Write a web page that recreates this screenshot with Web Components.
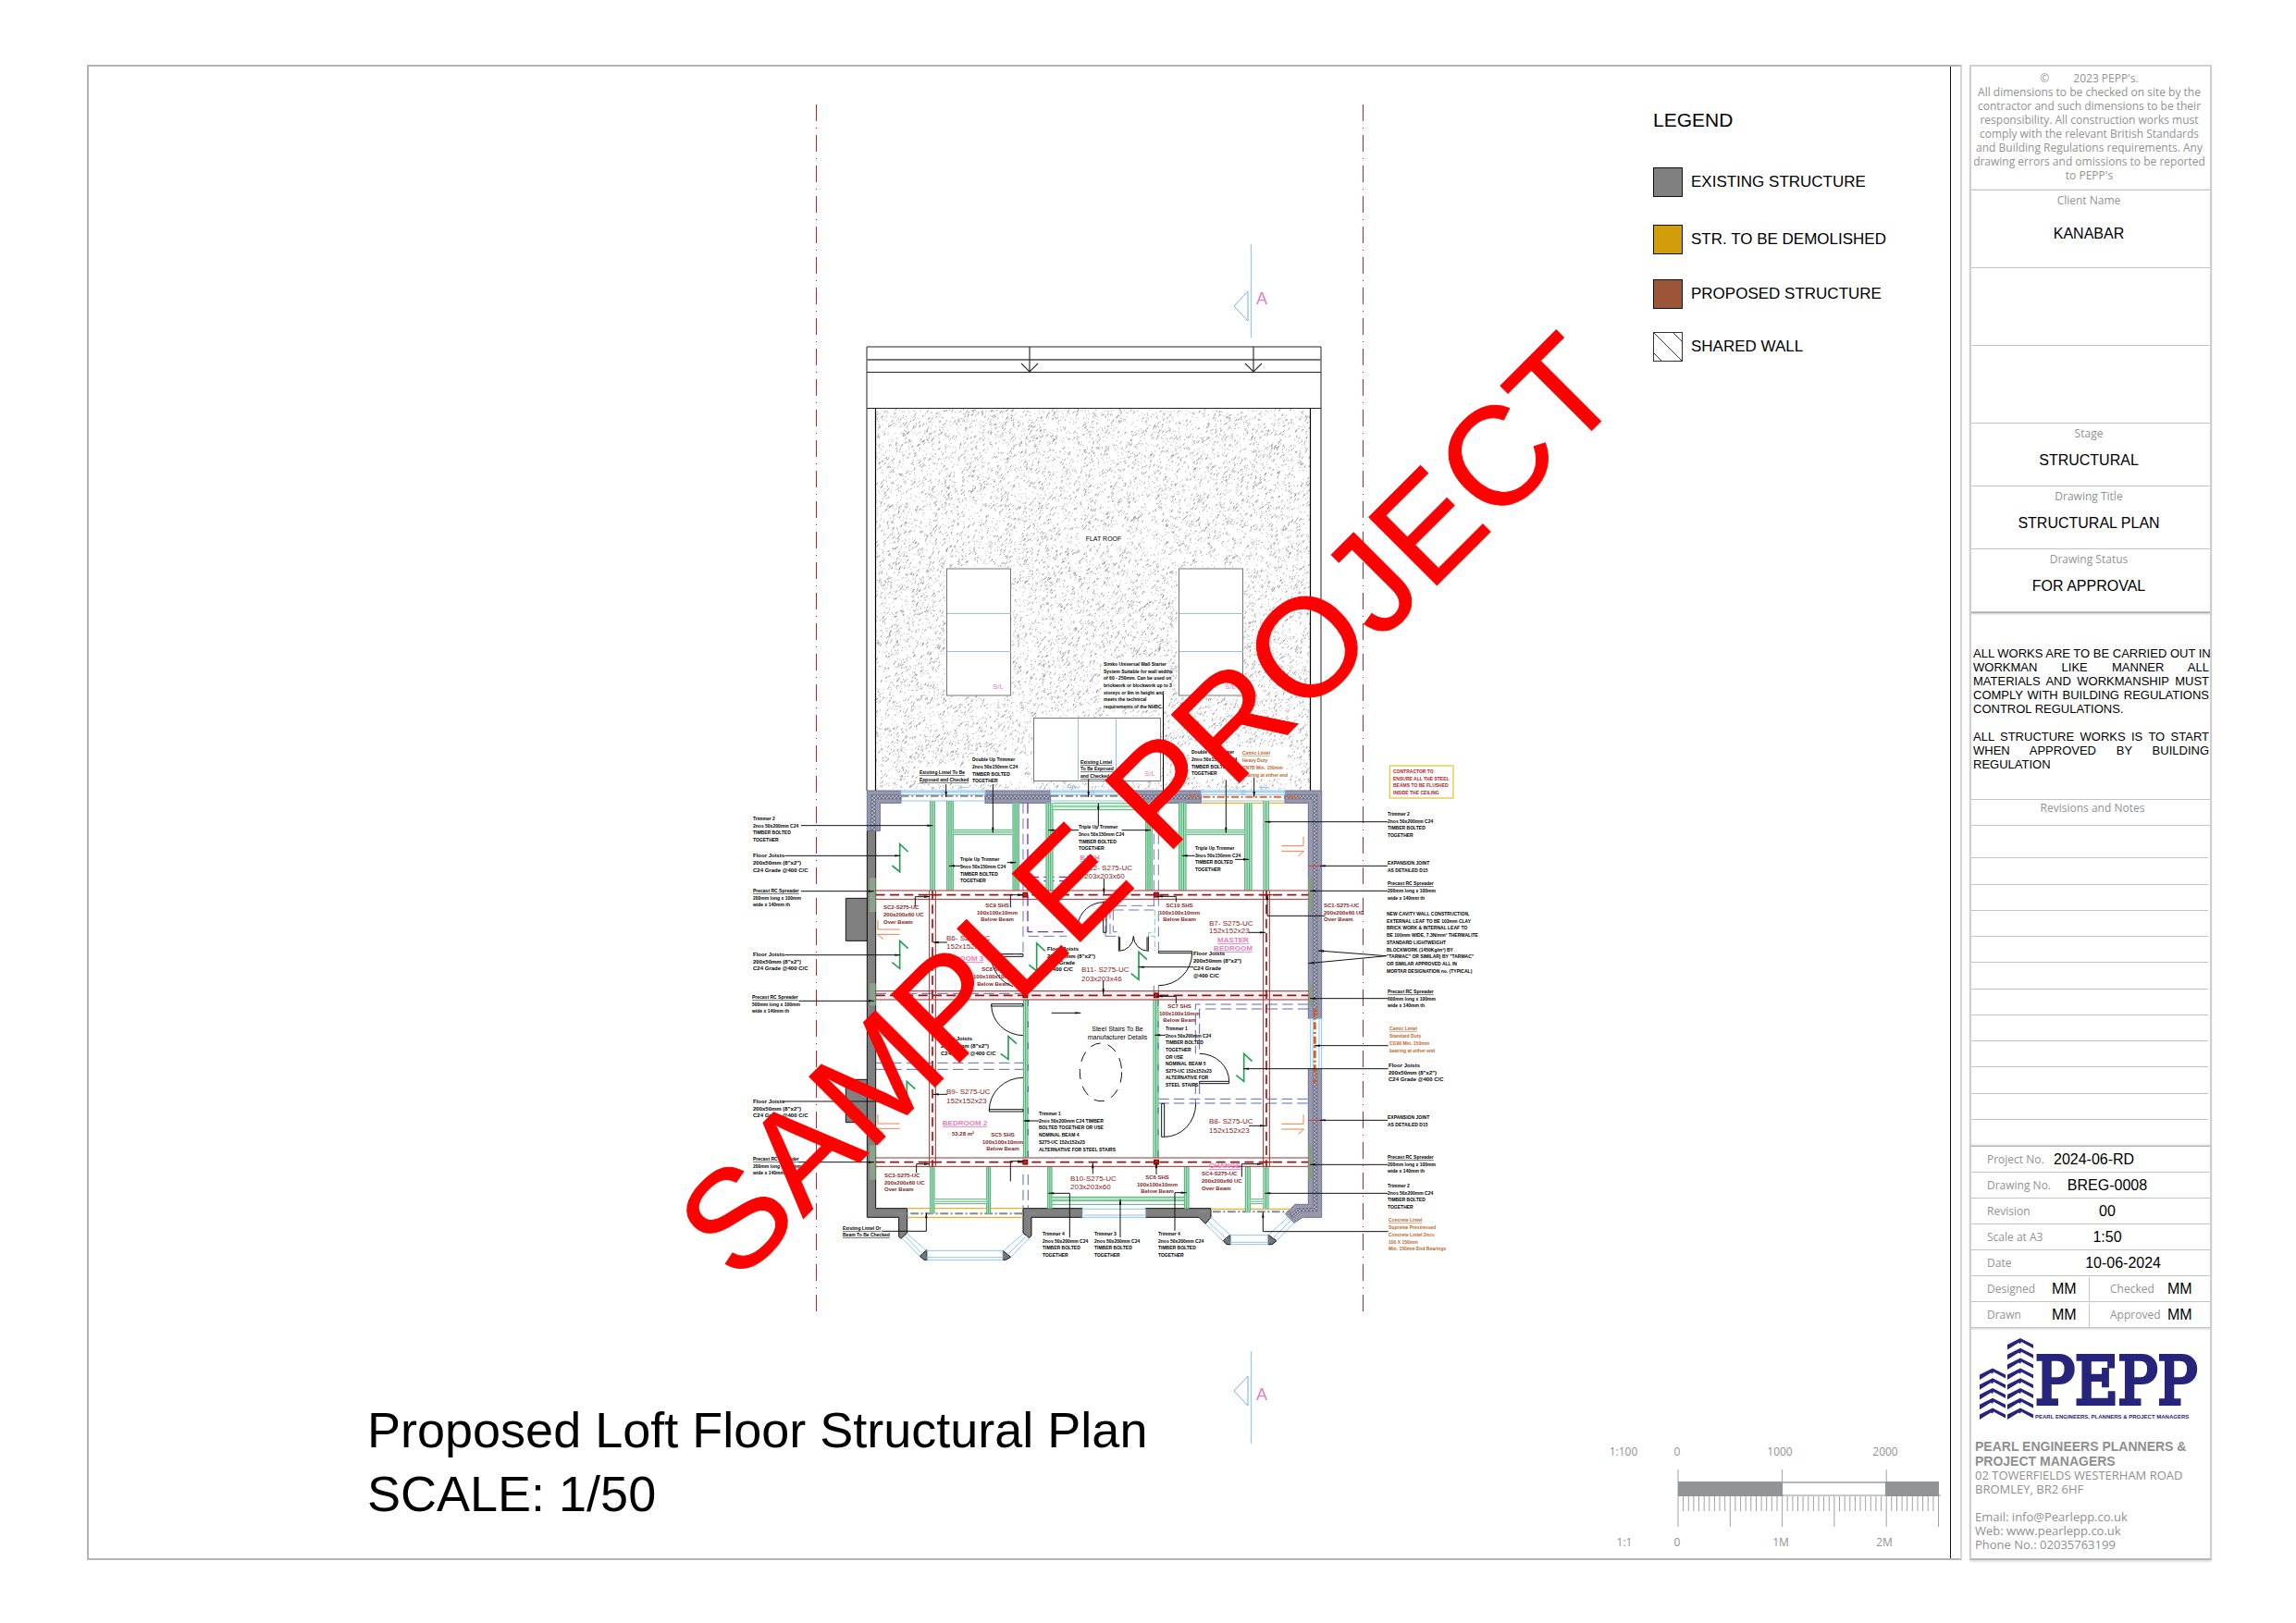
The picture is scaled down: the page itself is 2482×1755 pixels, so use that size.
<!DOCTYPE html>
<html lang="en">
<head>
<meta charset="utf-8">
<title>Proposed Loft Floor Structural Plan</title>
<style>
  html { background: #fff; }
  body {
    margin: 0;
    box-sizing: border-box;
    min-height: 100vh;
    padding: 70px 91px 68px 94px;
    display: grid;
    grid-template-columns: minmax(0, 1fr) 262px;
    gap: 8px;
    font-family: "Liberation Sans", Arial, sans-serif;
    color: #000;
    --label: #929292;
    --rule: #c4c4c4;
    --label-font: "Open Sans", "Noto Sans", sans-serif;
  }
</style>
</head>
<body>
<drawing-sheet>
  <floor-plan slot="plan"></floor-plan>
  <span slot="title">Proposed Loft Floor Structural Plan</span>
  <span slot="scale">SCALE: 1/50</span>
  <plan-legend slot="legend"></plan-legend>
  <scale-bar slot="bar"></scale-bar>
</drawing-sheet>
<title-block></title-block>

<script>
const define = (name, html, after) => {
  const tpl = document.createElement('template');
  tpl.innerHTML = html;
  customElements.define(name, class extends HTMLElement {
    constructor() {
      super();
      this.attachShadow({ mode: 'open' }).append(tpl.content.cloneNode(true));
      if (after) after(this.shadowRoot, this);
    }
  });
};

/* ---------- sheet frame ---------- */
define('drawing-sheet', `
<style>
  :host { display: block; box-sizing: border-box; border: 2px solid #b4b4b4; border-right-color: #d6d6d6; padding-right: 10px; }
  .area {
    box-sizing: border-box; height: 100%;
    display: grid;
    grid-template-columns: 301fr 333fr 1000fr 378fr;
    grid-template-rows: minmax(0, 1fr) auto;
    border-right: 1px solid #111;
    padding: 28px 0 8px;
  }
  .plan { grid-area: 1 / 3 / 3 / 4; }
  .titles { grid-area: 2 / 2 / 3 / 4; margin: 0; padding-bottom: 27px; font-weight: normal; font-size: 54px; line-height: 69px; }
  .titles ::slotted(span) { display: block; }
  .legend { grid-area: 1 / 4 / 2 / 5; padding: 16px 0 0 57px; }
  .bar { grid-area: 2 / 3 / 3 / 5; align-self: end; justify-self: end; padding: 0 8px 0 0; }
</style>
<section class="area">
  <div class="plan"><slot name="plan"></slot></div>
  <h1 class="titles"><slot name="title"></slot><slot name="scale"></slot></h1>
  <div class="legend"><slot name="legend"></slot></div>
  <div class="bar"><slot name="bar"></slot></div>
</section>`);

/* ---------- legend ---------- */
define('plan-legend', `
<style>
  :host { display: block; }
  h2 { margin: 0; font-size: 21px; line-height: 28px; font-weight: normal; }
  ul { list-style: none; margin: 37px 0 0; padding: 0; display: grid; grid-template-rows: 62px 59px 57px 32px; }
  li { display: flex; align-items: center; gap: 9px; height: 32px; font-size: 17px; white-space: nowrap; }
  svg { width: 32px; height: 32px; flex: none; }
</style>
<h2>LEGEND</h2>
<ul>
  <li><svg viewBox="0 0 32 32"><rect x=".5" y=".5" width="31" height="31" fill="#808080" stroke="#111"/></svg>EXISTING STRUCTURE</li>
  <li><svg viewBox="0 0 32 32"><rect x=".5" y=".5" width="31" height="31" fill="#d29d0a" stroke="#111"/></svg>STR. TO BE DEMOLISHED</li>
  <li><svg viewBox="0 0 32 32"><rect x=".5" y=".5" width="31" height="31" fill="#9c5537" stroke="#111"/></svg>PROPOSED STRUCTURE</li>
  <li><svg viewBox="0 0 32 32"><rect x=".5" y=".5" width="31" height="31" fill="#fff" stroke="#333"/><path d="M1 1L31 31M22 1L31 10M1 23L9 31" stroke="#333" fill="none"/></svg>SHARED WALL</li>
</ul>`);

/* ---------- scale bar ---------- */
define('scale-bar', `
<style>
  :host { display: block; }
  svg { display: block; width: 364px; height: 116px; }
  text { font: 12px "Open Sans", "Noto Sans", sans-serif; fill: #929292; text-anchor: middle; }
</style>
<svg viewBox="1737 1560 364 116" role="img" aria-label="Scale bar">
  <g id="t" stroke="#a2a2a4"></g>
  <rect x="1815" y="1601" width="113" height="16" fill="#939497"/>
  <rect x="2039" y="1601" width="58" height="16" fill="#939497"/>
  <path d="M1928 1602H2039" stroke="#b5b5b5" stroke-width="2"/><path d="M1928 1616H2099" stroke="#929292"/>
  <text x="1756" y="1573">1:100</text><text x="1814" y="1573">0</text><text x="1925" y="1573">1000</text><text x="2039" y="1573">2000</text>
  <text x="1757" y="1671">1:1</text><text x="1814" y="1671">0</text><text x="1926" y="1671">1M</text><text x="2038" y="1671">2M</text>
</svg>`, root => {
  let d = '';
  for (let i = 0; i <= 50; i++) {
    const x = (1815 + i * 5.63).toFixed(1);
    d += `M${x} ${i % 20 === 0 ? 1588 : 1617}V${i % 10 === 0 ? 1650 : 1633}`;
  }
  root.getElementById('t').innerHTML = `<path d="${d}"/>`;
});

/* ---------- company mark ---------- */
define('pepp-logo', `
<style>
  :host { display: block; }
  svg { display: block; width: 240px; height: 92px; }
  .n { font: 71px "DejaVu Serif Condensed", "DejaVu Serif", serif; font-stretch: condensed; fill: #27247b; stroke: #27247b; stroke-width: 4px; }
  .s { font: bold 6px "Liberation Sans", Arial, sans-serif; fill: #27247b; }
</style>
<svg viewBox="0 0 240 92" role="img" aria-label="PEPP">
  <g id="c" fill="#27247b"></g>
  <text class="n" x="62" y="73">PEPP</text>
  <text class="s" x="62" y="89">PEARL ENGINEERS, PLANNERS &amp; PROJECT MANAGERS</text>
</svg>`, root => {
  const chev = (x, y) => `<path d="M${x} ${y + 7}L${x + 14} ${y}L${x + 28} ${y + 7}V${y + 11}L${x + 15} ${y + 4}L${x + 14} ${y + 6}L${x + 12} ${y + 5}L${x} ${y + 12.5}Z"/>`;
  let s = '';
  for (let i = 0; i < 8; i++) s += chev(32, 2 + i * 10.8);
  for (let i = 3; i < 8; i++) s += chev(2, 2 + i * 10.8);
  root.getElementById('c').innerHTML = s;
});

/* ---------- one labelled field in the title block ---------- */
define('tb-field', `
<style>
  :host { display: flex; flex-direction: column; align-items: center; box-sizing: border-box; height: 68px; border-bottom: 1px solid var(--rule); padding: 3px 4px 0 0; }
  :host([tall]) { height: 84px; }
  .l { font: 12px/16px var(--label-font); color: var(--label); }
  .v { font-size: 16px; line-height: 20px; margin-top: 11px; }
  :host([tall]) .v { margin-top: 18px; }
</style>
<span class="l"><slot name="label"></slot></span>
<span class="v"><slot></slot></span>`);

/* ---------- title block ---------- */
define('title-block', `
<style>
  :host { display: flex; flex-direction: column; box-sizing: border-box; border: 2px solid #cfcfcf; border-bottom-color: #b5b5b5; box-shadow: 0 2px 2px #e4e4e4; }
  p { margin: 0; }
  .notice { box-sizing: border-box; height: 134px; padding: 5px 3px 0 0; text-align: center; font: 12px/15px var(--label-font); color: var(--label); white-space: nowrap; border-bottom: 1px solid #b0b0b0; }
  .c { display: inline-block; margin-right: 26px; }
  .fields { border-bottom: 1px solid #b0b0b0; box-shadow: 0 0 2px 1px #ccc; }
  .works { padding: 36px 1px 30px 2px; font-size: 13px; line-height: 15px; }
  .works span { display: block; white-space: nowrap; }
  .works .j { text-align: justify; text-align-last: justify; }
  .works p + p { margin-top: 15px; }
  .rev { border: solid var(--rule); border-width: 1px 0; margin: 0; font: 12px/18px var(--label-font); height: 27px; text-align: center; color: var(--label); padding-left: 4px; box-sizing: content-box; }
  ol { list-style: none; margin: 0; padding: 7px 0 1px; flex: 1; display: flex; flex-direction: column; }
  li { flex: 1; border-bottom: 1px solid var(--rule); margin-right: 2px; }
  li:last-child { border-bottom: 0; }
  dl { margin: 0; box-shadow: 0 0 2px 1px #ccc; border-top: 1px solid #b0b0b0; }
  dl > div { display: grid; grid-template-columns: 72px 116px 1fr; align-items: center; box-sizing: border-box; height: 28px; padding-left: 17px; border-bottom: 1px solid var(--rule); }
  dl > .two { grid-template-columns: 70px 41px 22px 62px 1fr; }
  .two i { height: 26px; border-right: 1px solid var(--rule); grid-column: 2; grid-row: 1; }
  .two dt:nth-of-type(2) { grid-column: 4; }
  .two dd:nth-of-type(1) { grid-column: 2; grid-row: 1; text-align: left; }
  .two dd:nth-of-type(2) { text-align: left; }
  dt { font: 12px/16px var(--label-font); color: var(--label); white-space: nowrap; }
  dd { margin: 0; font-size: 16px; text-align: center; white-space: nowrap; }
  .s { text-align: left; } .e { text-align: right; }
  pepp-logo { padding: 9px 0 0 7px; }
  address { font: 13px/15px var(--label-font); color: #8f8f8f; padding: 19px 0 7px 4px; white-space: nowrap; }
  address b { display: block; font: bold 14px/16px "Liberation Sans", Arial, sans-serif; }
  address .m { margin-top: 15px; }
  a { color: inherit; text-decoration: none; }
</style>
<p class="notice"><span class="c">©</span>2023 PEPP's.<br>All dimensions to be checked on site by the<br>contractor and such dimensions to be their<br>responsibility. All construction works must<br>comply with the relevant British Standards<br>and Building Regulations requirements. Any<br>drawing errors and omissions to be reported<br>to PEPP's</p>
<div class="fields">
  <tb-field tall><span slot="label">Client Name</span>KANABAR</tb-field>
  <tb-field tall></tb-field>
  <tb-field tall></tb-field>
  <tb-field><span slot="label">Stage</span>STRUCTURAL</tb-field>
  <tb-field><span slot="label">Drawing Title</span>STRUCTURAL PLAN</tb-field>
  <tb-field><span slot="label">Drawing Status</span>FOR APPROVAL</tb-field>
</div>
<div class="works">
  <p><span class="j">ALL WORKS ARE TO BE CARRIED OUT IN</span><span class="j">WORKMAN LIKE MANNER ALL</span><span class="j">MATERIALS AND WORKMANSHIP MUST</span><span class="j">COMPLY WITH BUILDING REGULATIONS</span><span>CONTROL REGULATIONS.</span></p>
  <p><span class="j">ALL STRUCTURE WORKS IS TO START</span><span class="j">WHEN APPROVED BY BUILDING</span><span>REGULATION</span></p>
</div>
<h3 class="rev">Revisions and Notes</h3>
<ol><li></li><li></li><li></li><li></li><li></li><li></li><li></li><li></li><li></li><li></li><li></li><li></li></ol>
<dl>
  <div><dt>Project No.</dt><dd class="s">2024-06-RD</dd></div>
  <div><dt>Drawing No.</dt><dd>BREG-0008</dd></div>
  <div><dt>Revision</dt><dd>00</dd></div>
  <div><dt>Scale at A3</dt><dd>1:50</dd></div>
  <div><dt>Date</dt><dd class="e">10-06-2024</dd></div>
  <div class="two"><dt>Designed</dt><i></i><dd>MM</dd><dt>Checked</dt><dd>MM</dd></div>
  <div class="two"><dt>Drawn</dt><i></i><dd>MM</dd><dt>Approved</dt><dd>MM</dd></div>
</dl>
<pepp-logo></pepp-logo>
<address>
  <b>PEARL ENGINEERS PLANNERS &amp;<br>PROJECT MANAGERS</b>
  02 TOWERFIELDS WESTERHAM ROAD<br>BROMLEY, BR2 6HF
  <div class="m">Email: <a href="mailto:info@Pearlepp.co.uk">info@Pearlepp.co.uk</a><br>Web: <a href="http://www.pearlepp.co.uk">www.pearlepp.co.uk</a><br>Phone No.: 02035763199</div>
</address>`);

/* ---------- floor plan ---------- */
define('floor-plan', `
<style>
  :host { display: block; }
  svg { display: block; width: 100%; overflow: visible; }
  text { font-family: "Liberation Sans", Arial, sans-serif; }
  .mark { font-size: 151px; fill: #f00; stroke: #f00; stroke-width: 1px; }
</style>
<svg viewBox="730 100 1000 1480" role="img" aria-label="Loft floor structural plan">
  <defs>
    <pattern id="brick" width="6" height="6" patternUnits="userSpaceOnUse"><rect width="6" height="6" fill="#8c8c98"/><path d="M0 0h3v3H0zM3 3h3v3H3z" fill="#a6a6b0"/></pattern>
    <pattern id="cav" width="12" height="12" patternUnits="userSpaceOnUse"><rect width="12" height="12" fill="#747488"/><path d="M1 1h4v4H1zM7 7h4v4H7z" fill="#e8e8ec"/></pattern>
  </defs>
  <g id="roof"></g>
  <g id="draw" transform="translate(800 780) scale(.33333)" fill="none"></g>
  <g id="notes"></g>
  <text class="mark" transform="translate(797 1389) rotate(-45)">SAMPLE PROJECT</text>
</svg>`, root => {
  /* Roof, in sheet units */
  let seed = 7;
  const rnd = () => (seed = (seed * 16807) % 2147483647) / 2147483647;
  const clear = [[1023,614,70,139],[1274,614,70,139],[1117,776,138,70],[1170,574,48,16],[1191,712,72,56],[992,830,58,17],[1050,816,56,30],[1287,808,104,34]];
  let dash = '', dots = '';
  for (let i = 0; i < 14500; i++) {
    const x = 947 + rnd() * 468, y = 443 + rnd() * 411, k = rnd();
    if (clear.some(c => x > c[0] - 2 && x < c[0] + c[2] && y > c[1] && y < c[1] + c[3])) continue;
    const p = `M${x.toFixed(1)} ${y.toFixed(1)}`;
    if (k < .25) dash += p + 'l1.6 -2.4'; else dots += p + 'h1';
  }
  const line = (d, c, w = 1, x = '') => `<path d="${d}" stroke="${c}" stroke-width="${w}" fill="none" ${x}/>`;
  const sky = '#8fc4ee';
  root.getElementById('roof').innerHTML =
    line(dash, '#777', .7) + line(dots, '#888', .7) +
    line('M937 855V375H1428V855M937 402.5H1428', '#222') + line('M937 389H1428', '#777', 2) + line('M937 441.5H1428', '#222') +
    line('M946.5 441V855M1416.5 441V855', '#000', 1.2) +
    line('M1113 375V402M1104 393L1113 402L1122 393M1355 375V402M1346 393L1355 402L1364 393', '#333', 1.2) +
    [[1023.5,615,69,137],[1274.5,615,69,137],[1117.5,776.5,137,68]].map(r => `<rect x="${r[0]}" y="${r[1]}" width="${r[2]}" height="${r[3]}" fill="#fff" stroke="#777"/>`).join('') +
    line('M1024 663.5H1093M1024 704.5H1093M1275 663.5H1344M1275 704.5H1344M1165.5 777V845M1206.5 777V845', sky) +
    line('M1257.5 750V862', '#000') +
    line('M882.5 113V1420M1473.5 113V1420', '#b8252c', 1, 'stroke-dasharray="18 7 1 7"') +
    line('M1352.5 264V365M1352.5 1461V1561', '#9cc9f0', 1.3) +
    line('M1334 331L1349 315V347ZM1334 1504L1349 1488V1520Z', '#6db0e6');

  /* Structure, in thirds of a sheet unit from the plan's own origin */
  const o = [];
  const L = (d, c, w = 3, x) => o.push(line(d, c, w, x));
  const R = (x, y, X, Y, f, s = 'none', w = 3) => o.push(`<rect x="${x}" y="${y}" width="${X - x}" height="${Y - y}" fill="${f}" stroke="${s}" stroke-width="${w}"/>`);
  const P = (pts, f, s = '#111', w = 3) => o.push(`<polygon points="${pts}" fill="${f}" stroke="${s}" stroke-width="${w}"/>`);
  const indigo = '#636bac', G = '#808080';

  /* existing walls */
  P('412,355 440,355 440,1580 542,1580 542,1660 522,1678 515,1672 515,1609 412,1609', G);
  P('343,574 412,574 412,712 343,712', G); P('343,1162 412,1162 412,1301 343,1301', G);
  P('918,1580 1110,1580 1110,1609 945,1609 945,1668 938,1676 918,1660', G);
  P('1315,1580 1527,1580 1527,1609 1509,1630 1488,1609 1315,1609', G);
  [[583,1735,605,1715,608,1747,597,1747],[852,1717,878,1738,862,1747,852,1747],[1567,1685,1590,1665,1592,1697,1578,1697],[1712,1665,1740,1685,1725,1697,1712,1697]].forEach(p => P(p.join(' '), '#777'));

  /* cavity walls */
  P('412,225 522,225 522,265 454,265 454,355 412,355', 'url(#brick)', indigo);
  P('424,238 522,238 522,252 440,252 440,355 424,355', 'url(#cav)', indigo, 2);
  [[795,1007],[1280,1495]].forEach(a => { R(a[0], 225, a[1], 265, 'url(#brick)', indigo); R(a[0], 238, a[1], 252, 'url(#cav)', indigo, 2); });
  P('1767,225 1886,225 1886,1609 1825,1609 1797,1627 1768,1598 1800,1567 1843,1567 1843,265 1767,265', 'url(#brick)', indigo);
  P('1767,238 1872,238 1872,1590 1815,1590 1792,1612 1782,1600 1808,1580 1858,1580 1858,252 1767,252', 'url(#cav)', indigo, 2);
  R(1840, 965, 1890, 1127, '#fff'); R(1850, 965, 1886, 1127, '#fff', sky); L('M1858 965V1127M1878 965V1127', sky);
  L('M1864 930V1172', '#dd5b1f', 8, 'stroke-dasharray="24 8 6 8"');
  [[508,618],[850,922],[1375,1487]].forEach(a => { R(420, a[0], 440, a[1], '#8aa48a'); R(1843, a[0], 1857, a[1], '#8a9c80'); });
  L('M1843 469H1880M1843 1294H1880', '#d33');

  /* windows */
  [[522,795],[1007,1280],[1495,1767]].forEach((a, i) => {
    R(a[0], 225, a[1], 238, '#eaf4fd', sky); L(`M${a[0]} 229H${a[1]}M${a[0]} 258H${a[1]}`, sky); R((a[0]+a[1])/2-4, 225, (a[0]+a[1])/2+4, 238, 'none', sky);
    if (i < 2) L(`M${a[0]} 242H${a[1]}`, '#888', 6, 'stroke-dasharray="26 8 6 8"');
  });
  L('M1455 245H1815', '#dd6a35', 6, 'stroke-dasharray="24 8 6 8"'); L('M1495 265H1767', '#e8b820', 4);
  R(1110, 1582, 1315, 1609, '#fff', sky); L('M1115 1602H1312', sky);
  L('M712 214H740M720 208L712 214L720 220M1060 214H1092M1084 208L1092 214L1084 220M1685 214H1715M1693 208L1685 214L1693 220', sky);
  /* bays */
  R(608, 1717, 852, 1747, '#fff', sky); L('M608 1739H852', sky);
  L('M527 1678L583 1735M535 1670L592 1728M542 1662L605 1718M938 1676L878 1738M930 1668L868 1730M918 1662L855 1718', sky);
  R(1592, 1667, 1712, 1697, '#fff', sky); L('M1592 1690H1712', sky);
  L('M1509 1630L1567 1687M1518 1622L1577 1679M1527 1609L1590 1667M1797 1627L1740 1685M1788 1617L1728 1677M1778 1607L1714 1666', sky);
  L('M542 1580H918M542 1609H918M1527 1582H1785', '#e8b030', 4);
  L('M505 1597H960M1485 1591H1785', '#888', 6, 'stroke-dasharray="26 8 6 8"');

  /* partitions over, dashed */
  const db = 'stroke-dasharray="34 16"';
  L('M918 265V760M935 697H1060M852 755H918M1185 697V640M1185 697H1230M1200 690V612M1210 612V683H1228M1220 598H1345M1210 612H1342M1342 265V598M1357 265V745M1342 857V880M1357 857V880', '#6a78bc', 3, db);
  L('M933 265V683H1060M935 518H1060M935 505H1060', '#7a2fc0', 4, db);
  L('M440 883H918M440 1108H918M440 1129H918M918 1470V1580M934 1470V1580', '#5a68b4', 3, db);
  L('M1843 918H1477V1078M1843 933H1490V1078M1477 1175V1239M1490 1175V1225M1357 1225H1843M1357 1239H1843', '#5a68b4', 3, db);
  L('M1345 612V685H1325V697H1345V745', '#7fd0a0', 3, 'stroke-dasharray="20 8"');

  /* timber trimmers */
  const green = '#2fa35c', pale = '#b4e2c6';
  const V = (x, X, y, Y) => { R(x, y, X, Y, pale); const n = X - x > 18 ? 4 : 3; for (let i = 0; i < n; i++) { const a = x + 1 + (X - x - 2) * i / (n - 1); L(`M${a} ${y}V${Y}`, green, 2.5); } };
  const H = (x, X, y, Y, f = '#fff') => { R(x, y, X, Y, f); for (let i = 0; i < 3; i++) { const a = y + (Y - y) * i / 2; L(`M${x} ${a}H${X}`, green, 2.5); } };
  [[616,632,258],[670,692,258],[884,905,265],[992,1015,265],[1315,1337,265],[1423,1447,265],[1636,1660,265],[1697,1715,258]].forEach(a => V(a[0], a[1], a[2], 548));
  H(692,884,352,367,'#dff2e6'); H(1015,1315,265,287,'#dff2e6'); H(1447,1636,352,367,'#dff2e6');
  V(918,934,903,1415); V(1340,1357,903,1415);
  V(616,631,1444,1597); V(799,813,1444,1597); V(997,1012,1444,1580); V(1440,1456,1444,1580); V(1638,1655,1444,1592); V(1697,1714,1444,1582);
  H(631,799,1550,1565); R(1012,1543,1440,1556,pale); H(1012,1440,1543,1567,'none'); H(1655,1697,1550,1565);
  L('M1356 903V1415M934 903V1415', '#2c6fa0', 3, 'stroke-dasharray="20 50"');

  /* steel beams */
  const steel = '#a02c2c';
  R(440,876,1843,903,'rgba(190,120,120,.12)');
  [549,875,1416].forEach(y => { L(`M440 ${y}H1843M440 ${y + 28}H1843`, steel, 3); L(`M440 ${y + 14}H1843`, '#8a1c1c', 5, 'stroke-dasharray="30 16"'); });
  [614,1697].forEach(x => { L(`M${x} 549V1444M${x + 20} 549V1444`, steel, 3); L(`M${x + 10} 549V1444`, '#8a1c1c', 5, 'stroke-dasharray="30 16"'); });
  [[925,563],[1350,563],[925,889],[1350,889],[925,1430],[1350,1430]].forEach(([x, y]) => R(x - 7, y - 7, x + 7, y + 7, '#c02020', '#8a1010', 4));
  L('M604 563H644M604 1430H644M1687 563H1727M1687 1430H1727', '#a01818', 4);

  /* doors */
  const ink = '#111';
  const D = d => L(d, ink);
  D('M1178 585H1188V685H1178ZM1178 587A85 85 0 0 0 1095 660');
  D('M1228 697V745A48 48 0 0 0 1276 697A48 48 0 0 0 1324 745V697M1232 700V742M1320 700V742');
  D('M1357 746H1466V752H1357ZM1466 752A108 106 0 0 1 1357 857');
  D('M815 755H918V763H815ZM815 763A105 105 0 0 0 885 860');
  D('M815 917H918V924H815ZM815 920A105 100 0 0 0 918 1019');
  D('M808 1259H918V1266H808ZM808 1262A110 106 0 0 1 918 1156');
  D('M1490 1168H1586V1175H1490ZM1586 1168A96 90 0 0 0 1490 1078');
  D('M1367 1240H1376V1348H1367ZM1376 1348A102 108 0 0 0 1478 1240');
  o.push('<ellipse cx="1170" cy="1138" rx="68" ry="94" stroke="#111" stroke-width="3" stroke-dasharray="34 24"/>');

  /* joist direction marks */
  [[518,398],[518,712],[962,720],[1293,748],[1634,1078],[541,1168]].forEach(([x, y]) => L(`M${x + 27} ${y + 25}L${x} ${y}V${y + 90}L${x - 25} ${y + 70}`, '#25a152', 5));
  L('M897 1046L870 1022V1096L845 1078', '#25a152', 5);
  [0, 630].forEach(k => L(`M447 ${645 + k}V${675 + k}H518M518 ${691 + k}H445L465 ${707 + k}`, '#e8824a'));
  [0, 902].forEach(k => L(`M1827 ${374 + k}V${404 + k}H1756M1756 ${421 + k}H1829L1810 ${437 + k}`, '#e8824a'));

  /* leaders: the arrowhead sits on the last point */
  const lead = (...p) => {
    const n = p.length, x = p[n - 2], y = p[n - 1], a = Math.atan2(y - p[n - 3], x - p[n - 4]), c = Math.cos(a) * 18, s = Math.sin(a) * 18;
    let d = `M${p[0]} ${p[1]}`;
    for (let i = 2; i < n; i += 2) d += `L${p[i]} ${p[i + 1]}`;
    L(d, '#111', 3);
    o.push(`<polygon fill="#000" points="${x},${y} ${x - c - s / 5},${y - s + c / 5} ${x - c + s / 5},${y - s - c / 5}"/>`);
  };
  [[198,338,625,338],[145,436,520,436],[198,551,435,551],[145,758,520,758],[190,907,435,907],[138,1233,545,1233],[190,1430,435,1430],
   [820,204,820,362],[1130,188,1130,246],[668,204,668,246],[1162,340,1162,266],[1098,353,1000,353],[1238,353,1332,353],[716,469,678,469],[866,458,895,458],
   [568,600,568,569,615,569],[877,604,877,563,918,563],[672,717,626,717],[1180,510,1180,560],[1178,840,1178,886],[672,1210,626,1210],
   [877,1492,877,1427,918,1427],[572,1465,572,1436,615,1436],[460,1654,604,1654,604,1594],[970,1296,920,1296],[1144,1468,1144,1432],
   [1069,1674,1069,1531,1000,1531],[1233,1674,1233,1550],[1410,1652,1410,1529,1448,1529],[1350,1470,1350,1432],[1627,1478,1627,1436,1695,1436],
   [1576,190,1576,362],[1667,182,1667,246],[1475,436,1433,436],[1605,448,1650,448],[1414,586,1414,568,1352,568],[1414,915,1414,892,1352,892],
   [1898,631,1710,631,1710,562],[1650,685,1704,685],[1470,797,1292,797],[1380,1018,1345,1018],[1650,1312,1704,1312],
   [2100,326,1702,326],[2100,469,1880,469],[2100,550,1848,550],[2096,761,1875,744],[2096,761,1843,785],[2100,899,1848,899],[2102,1052,1862,1052],[2102,1127,1632,1127],
   [2100,1294,1880,1294],[2100,1438,1848,1438],[2100,1531,1702,1531],[2102,1655,1696,1655,1696,1592],[1010,946,1105,946]
  ].forEach(a => lead(...a));
  R(2107, 144, 2313, 249, '#fff', '#e8c840', 4);
  root.getElementById('draw').innerHTML = o.join('');

  /* notes: x, first line centre, size, colour, lines, pitch, options (b bold, u first line underlined, U all, m centred) */
  const t = [];
  const esc = s => s.replace(/&/g, '&amp;');
  const raw = (x, y, size, fill, lines, pitch, opt = '') => lines.split('|').forEach((s, i) => t.push(
    `<text x="${x.toFixed(0)}" y="${Math.round(y + i * pitch + size * .36)}" font-size="${size}" fill="${fill}"${opt.includes('b') ? ' font-weight="bold"' : ''}${opt.includes('m') ? ' text-anchor="middle"' : ''}${opt.includes('U') || (opt.includes('u') && !i) ? ' text-decoration="underline"' : ''}>${esc(s)}</text>`));
  const T = (u, v, ...r) => raw(800 + u / 3, 780 + v / 3, ...r);
  const K = '#000', M = '#8a1c24', O = '#c0662a', PK = '#e77fbb';
  const trim = '2nos 50x200mm C24|TIMBER BOLTED|TOGETHER', tri = '3nos 50x150mm C24|TIMBER BOLTED|TOGETHER';
  const joist = 'Floor Joists|200x50mm (8"x2")|C24 Grade @400 C/C', pad = 'Precast RC Spreader|200mm long  x 100mm|wide x 140mm th';
  T(42,315,5,K,'Trimmer 2|'+trim,7.8,'b'); T(42,436,6,K,joist,7.8,'b'); T(42,550,5,K,pad,7.5,'bu');
  T(42,757,6,K,joist,7.5,'b'); T(40,895,5,K,pad.replace('200','500'),7.5,'bu');
  T(42,1233,6,K,joist,7.5,'b'); T(42,1420,5,K,pad,7.5,'bu');
  T(581,166,5,K,'Existing Lintel To Be|Exposed and Checked',8,'bU'); T(752,124,5,K,'Double Up Trimmer|'+tri.replace('3nos','2nos'),7.7,'b');
  T(1104,132,5,K,'Existing Lintel|To Be Exposed|and Checked',7.6,'bU');
  T(1097,343,5,K,'Triple Up Trimmer|'+tri,7.7,'b'); T(714,448,5,K,'Triple Up Trimmer|'+tri,7.7,'b');
  T(1463,100,5,K,'Double Up Trimmer|'+tri.replace('3nos','2nos'),7.7,'b'); T(1476,411,5,K,'Triple Up Trimmer|'+tri,7.7,'b');
  T(1630,102,5,O,'Catnic Lintel|Heavy Duty|CN7B  Min. 150mm|bearing at either end',8,'bu');
  T(2117,162,5,'#b01c24','CONTRACTOR TO|ENSURE ALL THE STEEL|BEAMS TO BE FLUSHED|INSIDE THE CEILING',7.7,'b');
  T(2100,300,5,K,'Trimmer 2|'+trim,7.7,'b'); T(2100,460,5,K,'EXPANSION JOINT|AS DETAILED D15',7.7,'b');
  T(2100,526,5,K,pad,8,'bu');
  T(2097,624,5,K,'NEW CAVITY WALL CONSTRUCTION,|EXTERNAL LEAF TO BE 103mm CLAY|BRICK WORK & INTERNAL LEAF TO|BE 100mm WIDE, 7.3N/mm² THERMALITE|STANDARD LIGHTWEIGHT|BLOCKWORK (1450Kg/m³) BY|"TARMAC" OR SIMILAR) BY "TARMAC"|OR SIMILAR APPROVED ALL IN|MORTAR DESIGNATION no. (TYPICAL)',7.75,'b');
  T(2100,877,5,K,pad.replace('200','600'),7.6,'bu');
  T(2105,997,5,O,'Catnic Lintel|Standard Duty|CG90  Min. 150mm|bearing at either end',8,'bu');
  T(2103,1116,6,K,joist,7.6,'b'); T(2100,1284,5,K,'EXPANSION JOINT|AS DETAILED D15',7.7,'b');
  T(2100,1414,5,K,pad,7.6,'bu'); T(2100,1506,5,K,'Trimmer 2|'+trim,7.7,'b');
  T(2102,1618,5,O,'Concrete Lintel|Supreme Prestressed|Concrete Lintel 2nos|100 X 150mm|Min. 150mm End Bearings',7.8,'bu');
  T(332,1645,5,K,'Existing Lintel Or|Beam To Be Checked',7.3,'bU');
  T(980,1662,5,K,'Trimmer 4|'+trim,7.7,'b'); T(1150,1662,5,K,'Trimmer 3|'+trim,7.7,'b'); T(1357,1662,5,K,'Trimmer 4|'+trim,7.7,'b');
  T(970,1272,5,K,'Trimmer 1|2nos 50x200mm C24 TIMBER|BOLTED TOGETHER OR USE|NOMINAL BEAM 4|S275-UC 152x152x23|ALTERNATIVE FOR STEEL STAIRS',7.8,'b');
  T(1380,997,5,K,'Trimmer 1|'+trim+'|OR USE|NOMINAL BEAM 5|S275-UC 152x152x23|ALTERNATIVE FOR|STEEL STAIRS',7.6,'b');
  T(997,738,6,K,'Floor Joists|200x50mm (8"x2")|C24 Grade|@400 C/C',7.4,'b'); T(1470,753,6,K,'Floor Joists|200x50mm (8"x2")|C24 Grade|@400 C/C',8,'b');
  T(651,1029,6,K,joist,8,'b');
  T(1225,997,7,K,'Steel Stairs To Be|manufacturer Details',9,'m');
  const sc = '|200x200x60 UC|Over Beam', sh = '|100x100x10mm|Below Beam';
  T(465,604,6,M,'SC2-S275-UC'+sc,7.7,'b'); T(468,1473,6,M,'SC3-S275-UC'+sc,7.5,'b'); T(1893,597,6,M,'SC1-S275-UC'+sc,7.5,'b'); T(1497,1467,6,M,'SC4-S275-UC'+sc,8,'b');
  T(833,597,6,M,'SC9 SHS'+sh,7.6,'mb'); T(1425,597,6,M,'SC10 SHS'+sh,7.6,'mb'); T(823,804,6,M,'SC8 SHS'+sh,8,'mb');
  T(1425,924,6,M,'SC7 SHS'+sh,7.5,'mb'); T(851,1341,6,M,'SC5 SHS'+sh,7.5,'mb'); T(1352,1479,6,M,'SC6 SHS'+sh,7.5,'mb');
  T(670,703,8,M,'B6- S275-UC|152x152x23',9); T(670,1200,8,M,'B9- S275-UC|152x152x23',10); T(1520,655,8,M,'B7- S275-UC|152x152x23',8); T(1520,1296,8,M,'B8- S275-UC|152x152x23',10);
  T(1115,474,8,M,'B12- S275-UC|203x203x60',9); T(1107,804,8,M,'B11- S275-UC|203x203x46',10); T(1072,1482,8,M,'B10-S275-UC|203x203x60',9);
  T(1133,441,8,PK,'BATH',9,'mbU'); T(718,769,8,PK,'BEDROOM 3',9,'mbU'); T(730,1302,8,PK,'BEDROOM 2',9,'mbU'); T(1600,709,8,PK,'MASTER|BEDROOM',9,'mbU'); T(1573,1441,8,PK,'CHANGE',9,'mbU');
  T(723,1337,6,M,'53.28 m²',9,'mb');
  raw(1193,582,7,K,'FLAT ROOF',9,'m'); raw(1079,742,8,PK,'S/L',9,'m'); raw(1330,742,8,PK,'S/L',9,'m'); raw(1243,836,8,PK,'S/L',9,'m');
  raw(1193,718,5,K,'Simko Universal Wall Starter|System Suitable for wall widths|of 60 - 250mm. Can be used on|brickwork or blockwork up to 3|storeys or 9m in height and|meets the technical|requirements of the NHBC.',7.7,'b');
  raw(1364,323,18,PK,'A',9,'m'); raw(1364,1508,18,PK,'A',9,'m');
  root.getElementById('notes').innerHTML = t.join('');
});
</script>
</body>
</html>
